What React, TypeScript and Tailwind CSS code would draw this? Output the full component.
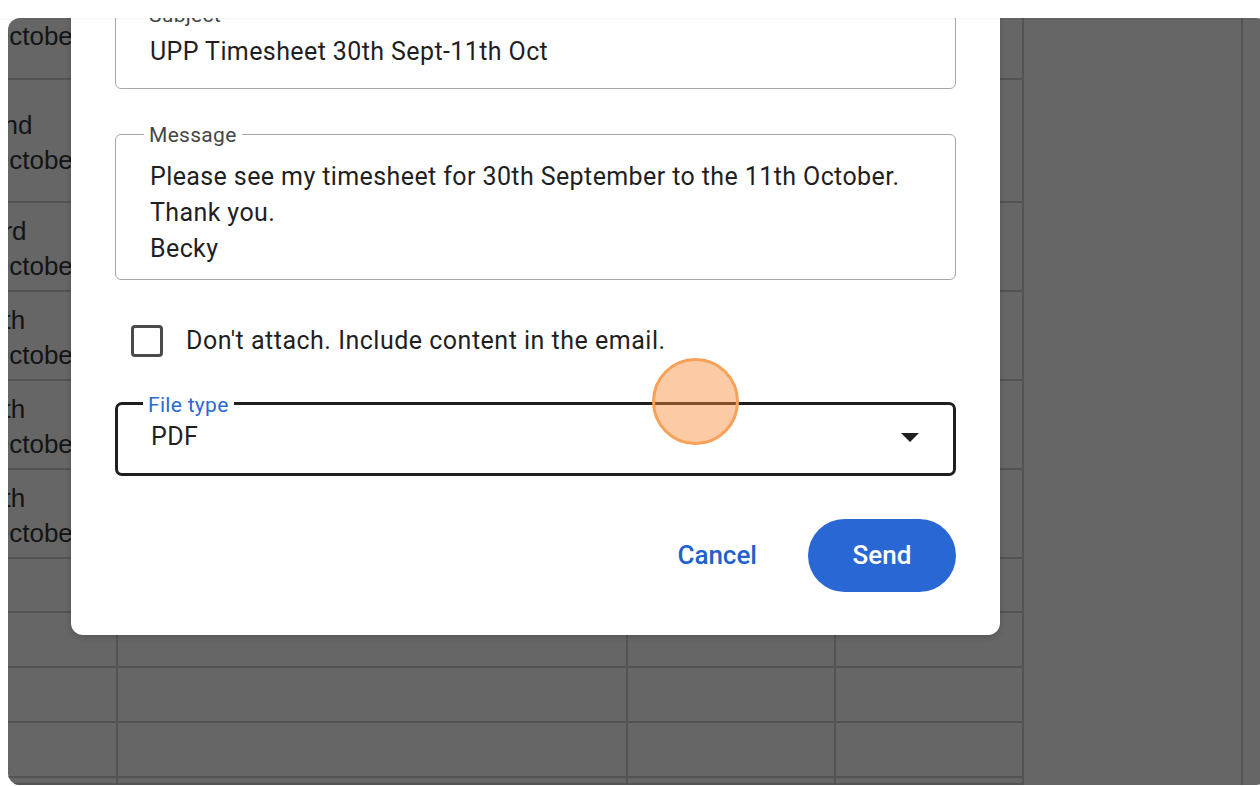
import React from "react";

const rowsA: { lines: string[]; first?: boolean }[] = [
  { lines: ["1st", "October"], first: true },
  { lines: ["2nd", "October"] },
  { lines: ["3rd", "October"] },
  { lines: ["7th", "October"] },
  { lines: ["8th", "October"] },
  { lines: ["9th", "October"] },
  { lines: [] },
  { lines: [] },
  { lines: [] },
  { lines: [] },
  { lines: [] },
];

function Sheet() {
  const cellBase = "border-r-2 border-b-2 border-[#535353] overflow-hidden";
  return (
    <div className="flex h-full">
      <div className="grid w-[1016px] shrink-0 grid-cols-[110px_510px_208px_188px] grid-rows-[62px_123px_89px_89px_89px_89px_54px_55px_55px_55px_1fr]">
        {rowsA.map((r, i) => (
          <React.Fragment key={i}>
            <div
              className={`${cellBase} flex flex-col ${
                r.first ? "justify-end pb-[24px]" : "justify-center pt-[4px]"
              } font-['Liberation_Sans',Arial,sans-serif] text-[26px] leading-[35px] text-[#141414]`}
            >
              {r.lines.map((l, j) => (
                <div key={j} className="ml-[-19px] whitespace-nowrap">
                  {l}
                </div>
              ))}
            </div>
            <div className={cellBase} />
            <div className={cellBase} />
            <div className={cellBase} />
          </React.Fragment>
        ))}
      </div>
      <div className="w-[219px] shrink-0 border-r-2 border-[#535353]" />
      <div className="flex-1" />
    </div>
  );
}

function FieldLabel({ text, color, left }: { text: string; color: string; left: string }) {
  return (
    <span
      className={`absolute top-0 -translate-y-1/2 bg-white px-[5px] text-[21px] leading-[24px] tracking-[0.3px] ${left} ${color}`}
    >
      {text}
    </span>
  );
}

function Dialog() {
  return (
    <div className="absolute left-[71px] top-0 z-10 w-[929px] rounded-b-[12px] bg-white px-[44px] pt-[14px] pb-[43px] shadow-[0_2px_6px_rgba(0,0,0,0.18)] font-['Roboto',sans-serif] text-[#1f1f1f]">
      {/* Subject */}
      <div className="relative flex h-[75px] items-center rounded-[6px] border-[1.5px] border-[#a6a6a6] pl-[34px]">
        <FieldLabel text="Subject" color="text-[#444746]" left="left-[28px]" />
        <span className="text-[25px] leading-[32px] tracking-[0.4px]">UPP Timesheet 30th Sept-11th Oct</span>
      </div>

      {/* Message */}
      <div className="relative mt-[45px] h-[146px] rounded-[6px] border-[1.5px] border-[#a6a6a6] pl-[34px] pt-[24px]">
        <FieldLabel text="Message" color="text-[#444746]" left="left-[28px]" />
        <div className="text-[25px] leading-[36px] tracking-[0.4px]">
          <div>Please see my timesheet for 30th September to the 11th October.</div>
          <div>Thank you.</div>
          <div>Becky</div>
        </div>
      </div>

      {/* Checkbox */}
      <div className="mt-[45px] flex h-[32px] items-center">
        <div className="ml-[16px] h-[32px] w-[32px] rounded-[4px] border-[3px] border-[#4a4a4a]" />
        <span className="ml-[23px] text-[25px] leading-[32px] tracking-[0.5px]">Don't attach. Include content in the email.</span>
      </div>

      {/* File type */}
      <div className="relative mt-[45px] flex h-[74px] items-center justify-between rounded-[7px] border-[3px] border-[#1f1f1f] pl-[33px] pr-[34px]">
        <FieldLabel text="File type" color="text-[#2a6bd1]" left="left-[25px]" />
        <span className="mt-[-4px] text-[25px] leading-[32px] tracking-[0.4px]">PDF</span>
        <svg width="18" height="10" viewBox="0 0 18 10" className="mt-[-2px]">
          <polygon points="0,0 18,0 9,9" fill="#1f1f1f" />
        </svg>
      </div>

      {/* Buttons */}
      <div className="mt-[43px] flex items-center justify-end">
        <button className="mr-[31px] flex h-[73px] items-center px-[20px] text-[26px] font-medium text-[#1f62cc]">
          Cancel
        </button>
        <button className="flex h-[73px] w-[148px] items-center justify-center rounded-full bg-[#2968d4] text-[26px] font-medium text-white">
          Send
        </button>
      </div>
    </div>
  );
}

export default function App() {
  return (
    <div className="relative h-[786px] w-[1260px] overflow-hidden bg-white">
      <div className="relative z-20 h-[18px] bg-white shadow-[0_1px_2px_rgba(0,0,0,0.05)]" />
      <div className="ml-[8px] h-[767px] w-[1260px] overflow-hidden rounded-[12px] bg-[#666666]">
        <Sheet />
      </div>
      <Dialog />
      <div className="absolute left-[652px] top-[358px] z-30 h-[87px] w-[87px] rounded-full border-[3px] border-[#f7a058] bg-[rgba(248,140,55,0.45)]" />
    </div>
  );
}
